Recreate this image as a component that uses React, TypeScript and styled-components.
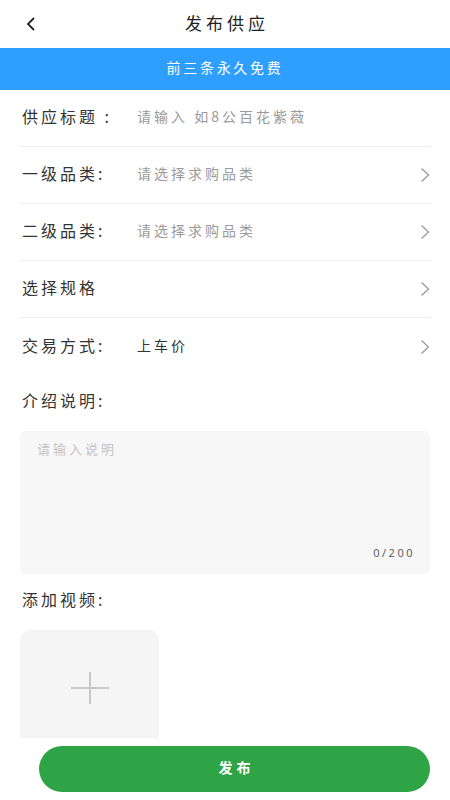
import React from 'react';
import styled, { createGlobalStyle } from 'styled-components';

const GlobalStyle = createGlobalStyle`
  html, body {
    margin: 0;
    padding: 0;
    background: #ffffff;
    font-family: "Noto Sans CJK SC", "Noto Sans", sans-serif;
  }
  * { box-sizing: border-box; }
`;

const Page = styled.div`
  width: 450px;
  min-height: 800px;
  background: #ffffff;
  padding-bottom: 62px;
`;

const Header = styled.div`
  height: 48px;
  display: flex;
  align-items: center;
  justify-content: center;
  position: relative;
  padding-bottom: 4px;
`;

const BackButton = styled.div`
  position: absolute;
  left: 22px;
  top: 14px;
  width: 18px;
  height: 20px;
  display: flex;
  align-items: center;
  justify-content: center;
`;

const Title = styled.h1`
  margin: 0;
  font-size: 17px;
  font-weight: 400;
  color: #222;
  letter-spacing: 4px;
  padding-left: 4px;
`;

const Banner = styled.div`
  height: 42px;
  background: #2f9fff;
  color: #ffffff;
  font-size: 14px;
  letter-spacing: 2.7px;
  display: flex;
  align-items: center;
  justify-content: center;
  padding-bottom: 4px;
`;

const Body = styled.div`
  padding: 0 20px;
`;

const Row = styled.div<{ divider?: boolean }>`
  height: 57px;
  display: flex;
  align-items: center;
  padding-left: 2px;
  border-bottom: ${(p) => (p.divider ? '1px solid #eeeeee' : 'none')};
`;

const Label = styled.span`
  width: 115px;
  flex-shrink: 0;
  font-size: 16px;
  color: #333;
  letter-spacing: 3px;
  margin-bottom: 4px;
`;

const Value = styled.span<{ placeholder?: boolean }>`
  flex: 1;
  font-size: 14px;
  letter-spacing: 3px;
  margin-bottom: 4px;
  color: ${(p) => (p.placeholder ? '#9a9a9a' : '#333')};
`;

const Arrow = styled.div`
  width: 12px;
  display: flex;
  justify-content: flex-end;
`;

const SectionTitle = styled.div`
  font-size: 16px;
  color: #333;
  letter-spacing: 3px;
  padding-left: 2px;
  height: 56px;
  display: flex;
  align-items: center;
  padding-bottom: 6px;
`;

const TextBox = styled.div`
  height: 143px;
  background: #f7f7f7;
  border-radius: 5px;
  padding: 8px 15px 14px 17px;
  display: flex;
  flex-direction: column;
  justify-content: space-between;
`;

const Placeholder = styled.div`
  font-size: 13px;
  letter-spacing: 3px;
  color: #c4c4c4;
`;

const Counter = styled.div`
  align-self: flex-end;
  font-size: 11px;
  letter-spacing: 2.5px;
  color: #555;
  font-family: "Open Sans", sans-serif;
`;

const VideoSection = styled.div`
  margin-top: 0;
`;

const UploadBox = styled.div`
  width: 139px;
  height: 115px;
  border-radius: 10px 10px 0 0;
  background: #f5f5f5;
  display: flex;
  align-items: center;
  justify-content: center;
`;

const BottomBar = styled.div`
  position: fixed;
  left: 0;
  right: 0;
  bottom: 0;
  height: 62px;
  background: #ffffff;
  padding: 8px 20px 8px 39px;
`;

const SubmitButton = styled.button`
  width: 100%;
  height: 46px;
  border: none;
  border-radius: 23px;
  background: #2ea446;
  color: #ffffff;
  font-family: "Noto Sans CJK SC", sans-serif;
  font-size: 14px;
  font-weight: 700;
  letter-spacing: 4px;
  padding: 0 0 4px 4px;
`;

const Chevron = () => (
  <svg width="10" height="16" viewBox="0 0 10 16">
    <path d="M1.5 1.5 L8.5 8 L1.5 14.5" fill="none" stroke="#999" strokeWidth="1.3" />
  </svg>
);

const rows = [
  { label: '供应标题 :', value: '请输入 如8公百花紫薇', placeholder: true, arrow: false },
  { label: '一级品类:', value: '请选择求购品类', placeholder: true, arrow: true },
  { label: '二级品类:', value: '请选择求购品类', placeholder: true, arrow: true },
  { label: '选择规格', value: '', placeholder: false, arrow: true },
  { label: '交易方式:', value: '上车价', placeholder: false, arrow: true },
];

export default function App() {
  return (
    <Page>
      <GlobalStyle />
      <Header>
        <BackButton>
          <svg width="10" height="14" viewBox="0 0 10 14">
            <path d="M8 1 L2 7 L8 13" fill="none" stroke="#222" strokeWidth="1.8" />
          </svg>
        </BackButton>
        <Title>发布供应</Title>
      </Header>
      <Banner>前三条永久免费</Banner>
      <Body>
        {rows.map((r, i) => (
          <Row key={r.label} divider={i < rows.length - 1}>
            <Label>{r.label}</Label>
            <Value placeholder={r.placeholder}>{r.value}</Value>
            {r.arrow && (
              <Arrow>
                <Chevron />
              </Arrow>
            )}
          </Row>
        ))}
        <SectionTitle>介绍说明:</SectionTitle>
        <TextBox>
          <Placeholder>请输入说明</Placeholder>
          <Counter>0/200</Counter>
        </TextBox>
        <VideoSection>
          <SectionTitle>添加视频:</SectionTitle>
          <UploadBox>
            <svg width="38" height="32" viewBox="0 0 38 32">
              <path d="M19 0 V32 M0 16 H38" stroke="#c8c8c8" strokeWidth="2" />
            </svg>
          </UploadBox>
        </VideoSection>
      </Body>
      <BottomBar>
        <SubmitButton>发布</SubmitButton>
      </BottomBar>
    </Page>
  );
}
